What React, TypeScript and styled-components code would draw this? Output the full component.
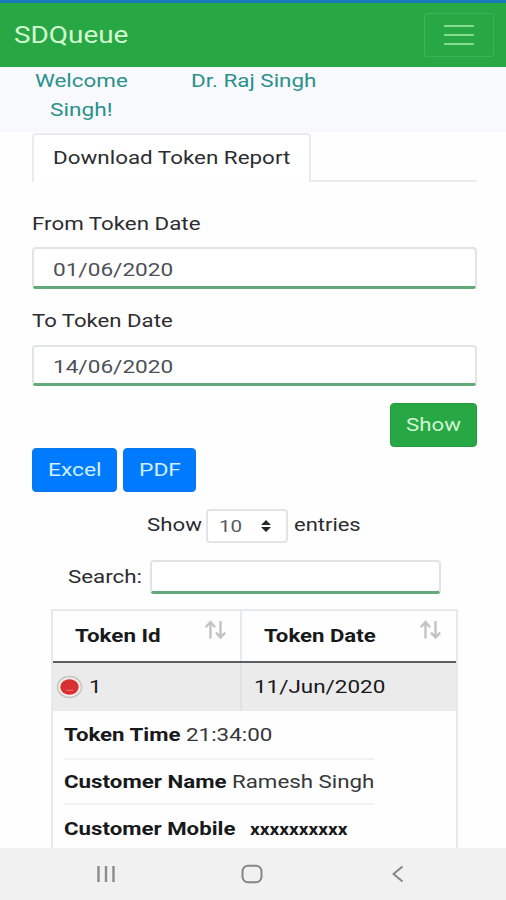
import React, { useLayoutEffect, useRef, useState } from 'react';
import styled, { createGlobalStyle } from 'styled-components';

const GlobalStyle = createGlobalStyle`
  * { box-sizing: border-box; }
  body { margin: 0; background: #fefefe; font-family: Roboto, "Liberation Sans", sans-serif; overflow: hidden; }
`;

const TextBox = styled.span<{ $w: number; $ml: number; $size: number; $bold: boolean }>`
  display: block;
  flex: none;
  width: ${(p) => p.$w}px;
  margin-left: ${(p) => p.$ml}px;
  font-size: ${(p) => p.$size}px;
  font-weight: ${(p) => (p.$bold ? 700 : 400)};
  line-height: 28px;
  text-align: left;
  white-space: nowrap;
`;

const TextInner = styled.span`
  display: inline-block;
  transform-origin: left center;
`;

type TextProps = { w: number; ml?: number; size?: number; bold?: boolean; children: string };

/* Wide-set text: stretches its glyphs to fill the given width. */
function Text({ w, ml = 0, size = 19, bold = false, children }: TextProps) {
  const ref = useRef<HTMLSpanElement>(null);
  const [scale, setScale] = useState(1);
  useLayoutEffect(() => {
    if (ref.current) setScale(w / ref.current.offsetWidth);
  }, [w, size, children]);
  return (
    <TextBox $w={w} $ml={ml} $size={size} $bold={bold}>
      <TextInner ref={ref} style={{ transform: `scaleX(${scale})` }}>{children}</TextInner>
    </TextBox>
  );
}

const Screen = styled.div`
  width: 506px;
  height: 900px;
  display: flex;
  flex-direction: column;
  color: #2b2d30;
`;

const StatusStrip = styled.div`
  height: 3px;
  flex: none;
  background: #1878b8;
`;

const Navbar = styled.header`
  height: 64px;
  flex: none;
  display: flex;
  align-items: center;
  justify-content: space-between;
  padding: 0 12px 0 14px;
  background: #28a745;
  color: #d2f8d0;
`;

const Brand = styled.div`
  padding-top: 2px;
`;

const Toggler = styled.button`
  width: 70px;
  height: 44px;
  padding: 0;
  display: flex;
  align-items: center;
  justify-content: center;
  background: transparent;
  border: 1px solid #3bb356;
  border-radius: 3px;
`;

const Greeting = styled.section`
  height: 65px;
  flex: none;
  display: flex;
  padding: 0 34px;
  background: #f8f9fc;
  color: #2a918c;
`;

const GreetingColumn = styled.div`
  width: 94px;
  display: flex;
  flex-direction: column;
  align-items: center;
  gap: 1px;
`;

const Content = styled.main`
  flex: 1;
  min-height: 0;
  overflow: hidden;
  padding: 1px 29px 0 32px;
  display: flex;
  flex-direction: column;
`;

const TabBar = styled.nav`
  height: 49px;
  flex: none;
  display: flex;
`;

const Tab = styled.div`
  width: 279px;
  padding: 9px 0 0 20px;
  border: 2px solid #ebebec;
  border-bottom: 0;
  border-radius: 4px 4px 0 0;
  background: #fff;
`;

const TabLine = styled.div`
  flex: 1;
  border-bottom: 2px solid #ebebec;
`;

const Field = styled.label<{ $top: number }>`
  display: block;
  flex: none;
  margin-top: ${(p) => p.$top}px;
`;

const InputBox = styled.div<{ $h: number; $w?: number; $mt?: number }>`
  height: ${(p) => p.$h}px;
  width: ${(p) => (p.$w ? `${p.$w}px` : '100%')};
  margin-top: ${(p) => p.$mt ?? 0}px;
  display: flex;
  align-items: center;
  padding: 4px 0 0 19px;
  background: #fff;
  border: 2px solid #e2e3e4;
  border-bottom: 3px solid #62aa79;
  border-radius: 4px;
  color: #4c5157;
`;

const ActionRow = styled.div<{ $end?: boolean; $mt: number }>`
  display: flex;
  flex: none;
  gap: 6px;
  margin-top: ${(p) => p.$mt}px;
  justify-content: ${(p) => (p.$end ? 'flex-end' : 'flex-start')};
`;

const Button = styled.button<{ $w: number; $green?: boolean }>`
  width: ${(p) => p.$w}px;
  height: 44px;
  padding: 0;
  display: flex;
  align-items: center;
  justify-content: center;
  border: 1px solid ${(p) => (p.$green ? '#219b3c' : '#0877ec')};
  border-radius: 4px;
  background: ${(p) => (p.$green ? '#28a745' : '#007bff')};
  color: ${(p) => (p.$green ? '#d0f7d3' : '#d0efff')};
  font-family: inherit;
`;

const LengthRow = styled.div`
  display: flex;
  flex: none;
  align-items: center;
  height: 34px;
  margin: 17px 0 0 115px;
`;

const LengthLabel = styled.div`
  padding-bottom: 2px;
`;

const Select = styled.div`
  width: 82px;
  height: 34px;
  margin-left: 4px;
  padding: 0 15px 0 10px;
  display: flex;
  align-items: center;
  justify-content: space-between;
  border: 2px solid #e3e4e5;
  border-radius: 4px;
  background: #fff;
  color: #555a60;
`;

const SearchRow = styled.div`
  display: flex;
  flex: none;
  align-items: center;
  margin: 17px 0 0 36px;
  gap: 8px;
`;

const Table = styled.section`
  width: 407px;
  flex: none;
  margin: 15px 0 0 19px;
  border: 2px solid #e8e9ea;
  border-bottom: 0;
  color: #18191b;
`;

const HeadRow = styled.div`
  display: flex;
  height: 52px;
  border-bottom: 2px solid #5c5e60;
`;

const HeadCell = styled.div<{ $w: number; $last?: boolean }>`
  width: ${(p) => p.$w}px;
  display: flex;
  justify-content: space-between;
  padding: 11px ${(p) => (p.$last ? 14 : 13)}px 0 22px;
  border-right: ${(p) => (p.$last ? 0 : 2)}px solid #e8e9ea;
`;

const SortSvg = styled.svg`
  margin-top: -2px;
`;

const DataRow = styled.div`
  display: flex;
  height: 48px;
  background: #ebebeb;
`;

const DataCell = styled.div<{ $w: number; $pl: number; $last?: boolean }>`
  width: ${(p) => p.$w}px;
  display: flex;
  align-items: center;
  padding-left: ${(p) => p.$pl}px;
  border-right: ${(p) => (p.$last ? 0 : 2)}px solid #e2e2e2;
`;

const Details = styled.div`
  width: 321px;
  padding-left: 11px;
`;

const Detail = styled.div<{ $h: number }>`
  height: ${(p) => p.$h}px;
  display: flex;
  align-items: center;
  border-bottom: 2px solid #f2f2f2;
`;

const Value = styled.div`
  color: #35373a;
`;

const SystemBar = styled.footer`
  height: 52px;
  flex: none;
  display: flex;
  align-items: center;
  background: #f1f1f1;
  padding-left: 96px;
`;

const SystemIcon = styled.svg<{ $ml?: number }>`
  flex: none;
  margin-left: ${(p) => p.$ml ?? 0}px;
`;

function SortIcon() {
  return (
    <SortSvg width="22" height="20" viewBox="0 0 22 20" fill="none" stroke="#c3c3c3" strokeWidth="2.4">
      <path d="M5.5 18.5V2M0.7 7.2L5.5 2l4.6 5.2M15.5 1v16.6M11 12.6l4.5 4.8L20.2 12.6" />
    </SortSvg>
  );
}

export default function App() {
  return (
    <>
      <GlobalStyle />
      <Screen>
        <StatusStrip />
        <Navbar>
          <Brand><Text w={114} size={23}>SDQueue</Text></Brand>
          <Toggler aria-label="Menu">
            <svg width="30" height="22" viewBox="0 0 30 22" stroke="#86dd91" strokeWidth="2.2" strokeLinecap="round">
              <path d="M1 2H29M1 11H29M1 20H29" />
            </svg>
          </Toggler>
        </Navbar>
        <Greeting>
          <GreetingColumn>
            <Text w={93}>Welcome</Text>
            <Text w={62}>Singh!</Text>
          </GreetingColumn>
          <Text w={125} ml={63}>Dr. Raj Singh</Text>
        </Greeting>
        <Content>
          <TabBar>
            <Tab><Text w={237} ml={-1}>Download Token Report</Text></Tab>
            <TabLine />
          </TabBar>
          <Field $top={28}>
            <Text w={168}>From Token Date</Text>
            <InputBox $h={42} $mt={9}><Text w={120}>01/06/2020</Text></InputBox>
          </Field>
          <Field $top={18}>
            <Text w={141}>To Token Date</Text>
            <InputBox $h={41} $mt={10}><Text w={120}>14/06/2020</Text></InputBox>
          </Field>
          <ActionRow $end $mt={17}>
            <Button $w={87} $green><Text w={55}>Show</Text></Button>
          </ActionRow>
          <ActionRow $mt={1}>
            <Button $w={85}><Text w={54}>Excel</Text></Button>
            <Button $w={73}><Text w={42}>PDF</Text></Button>
          </ActionRow>
          <LengthRow>
            <LengthLabel><Text w={55}>Show</Text></LengthLabel>
            <Select>
              <Text w={23} size={17} ml={1}>10</Text>
              <svg width="10" height="12" viewBox="0 0 10 12" fill="#27282b">
                <path d="M0 5L5 0l5 5zM0 7h10L5 12z" />
              </svg>
            </Select>
            <LengthLabel><Text w={67} ml={6}>entries</Text></LengthLabel>
          </LengthRow>
          <SearchRow>
            <Text w={74}>Search:</Text>
            <InputBox $h={34} $w={291} />
          </SearchRow>
          <Table>
            <HeadRow>
              <HeadCell $w={189}><Text w={86} bold>Token Id</Text><SortIcon /></HeadCell>
              <HeadCell $w={214} $last><Text w={112} bold>Token Date</Text><SortIcon /></HeadCell>
            </HeadRow>
            <DataRow>
              <DataCell $w={189} $pl={3}>
                <svg width="28" height="24" viewBox="0 0 28 24">
                  <ellipse cx="13.5" cy="12" rx="12" ry="10.5" fill="#f6efec" stroke="#c5c5c3" strokeWidth="1.5" />
                  <ellipse cx="13.5" cy="12" rx="9.2" ry="7.7" fill="#d82f32" />
                  <path d="M10 15.3h7" stroke="#e66a60" strokeWidth="1.2" />
                </svg>
                <Text w={13} ml={5}>1</Text>
              </DataCell>
              <DataCell $w={214} $pl={12} $last><Text w={131}>11/Jun/2020</Text></DataCell>
            </DataRow>
            <Details>
              <Detail $h={49}>
                <Text w={117} bold>Token Time</Text>
                <Value><Text w={86} ml={5}>21:34:00</Text></Value>
              </Detail>
              <Detail $h={45}>
                <Text w={162} bold>Customer Name</Text>
                <Value><Text w={142} ml={6}>Ramesh Singh</Text></Value>
              </Detail>
              <Detail $h={49}>
                <Text w={172} bold>Customer Mobile</Text>
                <Text w={98} ml={14} size={17} bold>xxxxxxxxxx</Text>
              </Detail>
            </Details>
          </Table>
        </Content>
        <SystemBar>
          <SystemIcon width="20" height="18" viewBox="0 0 20 18" stroke="#8c8c8c" strokeWidth="2.4">
            <path d="M2.5 1v16M10 1v16M17.5 1v16" />
          </SystemIcon>
          <SystemIcon $ml={125} width="22" height="20" viewBox="0 0 22 20" fill="none" stroke="#858585" strokeWidth="2">
            <rect x="1.5" y="1.8" width="19" height="16.4" rx="5.5" />
          </SystemIcon>
          <SystemIcon $ml={129} width="12" height="18" viewBox="0 0 12 18" fill="none" stroke="#858585" strokeWidth="2">
            <path d="M10.5 1.5L1.5 9l9 7.5" />
          </SystemIcon>
        </SystemBar>
      </Screen>
    </>
  );
}
